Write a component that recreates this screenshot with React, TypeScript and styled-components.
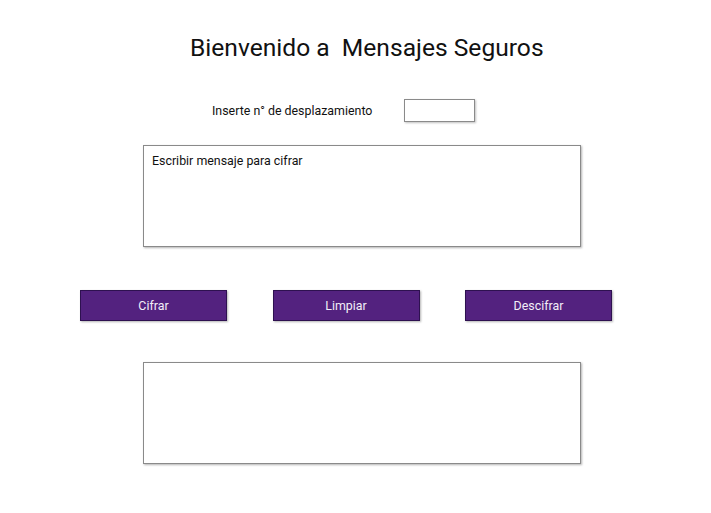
import React from "react";
import styled, { createGlobalStyle } from "styled-components";

const GlobalStyle = createGlobalStyle`
  body {
    margin: 0;
    background: #ffffff;
    font-family: Roboto, "Liberation Sans", sans-serif;
    color: #111;
  }
`;

const Page = styled.div`
  width: 711px;
  height: 513px;
  display: flex;
  flex-direction: column;
  padding-top: 33px;
  box-sizing: border-box;
`;

interface OffsetProps {
  $left: number;
}

const Title = styled.h1<OffsetProps>`
  margin: 0 0 0 ${(p) => p.$left}px;
  font-size: 24.6px;
  font-weight: 400;
  line-height: 30px;
  white-space: pre;
`;

const ShiftRow = styled.div<OffsetProps>`
  display: flex;
  align-items: center;
  margin: 36px 0 0 ${(p) => p.$left}px;
  gap: 32px;
`;

const Label = styled.span`
  font-size: 12.4px;
`;

const ShiftInput = styled.input`
  width: 71px;
  height: 23px;
  box-sizing: border-box;
  border: 1px solid #8a8a8a;
  box-shadow: 1px 1px 2px rgba(0, 0, 0, 0.25);
  outline: none;
  padding: 0 4px;
  font-family: Roboto, sans-serif;
`;

const TextBox = styled.textarea<OffsetProps & { $top: number }>`
  width: 438px;
  height: 102px;
  box-sizing: border-box;
  margin: ${(p) => p.$top}px 0 0 ${(p) => p.$left}px;
  padding: 7px 8px;
  border: 1px solid #8a8a8a;
  box-shadow: 1px 1px 2px rgba(0, 0, 0, 0.3);
  resize: none;
  outline: none;
  font-family: Roboto, sans-serif;
  font-size: 12.4px;
  color: #111;

  &::placeholder {
    color: #111;
  }
`;

const ButtonRow = styled.div<OffsetProps>`
  display: flex;
  gap: 45.5px;
  margin: 43px 0 0 ${(p) => p.$left}px;
`;

const Button = styled.button`
  width: 147px;
  height: 31px;
  border: 1px solid #2e1150;
  background: #53227f;
  color: #f2eef7;
  font-family: Roboto, sans-serif;
  font-size: 12.4px;
  box-shadow: 1px 1px 2px rgba(0, 0, 0, 0.3);
  cursor: pointer;
`;

export default function App() {
  return (
    <>
      <GlobalStyle />
      <Page>
        <Title $left={190}>{"Bienvenido a  Mensajes Seguros"}</Title>
        <ShiftRow $left={212}>
          <Label>Inserte n° de desplazamiento</Label>
          <ShiftInput type="text" />
        </ShiftRow>
        <TextBox $left={143} $top={23} placeholder="Escribir mensaje para cifrar" />
        <ButtonRow $left={80}>
          <Button>Cifrar</Button>
          <Button>Limpiar</Button>
          <Button>Descifrar</Button>
        </ButtonRow>
        <TextBox $left={143} $top={41} readOnly />
      </Page>
    </>
  );
}
